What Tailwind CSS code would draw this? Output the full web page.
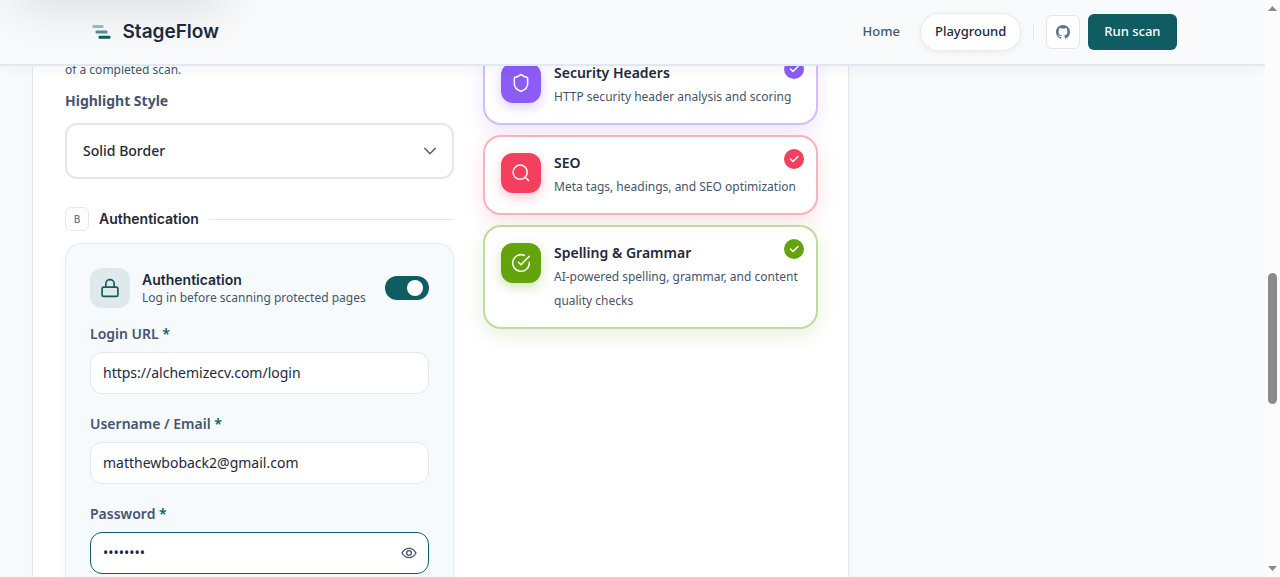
<!DOCTYPE html>
<html lang="en">
<head>
    <meta charset="UTF-8">
    <meta name="viewport" content="width=device-width, initial-scale=1.0">
    <title>StageFlow - Playground</title>
    <script src="https://cdn.jsdelivr.net/npm/@tailwindcss/browser@4"></script>
</head>

<body class="flex h-screen overflow-hidden bg-[#f8fafc] font-['Noto_Sans',sans-serif] text-[#1e293b]">
    <div class="relative flex-1 min-w-0 overflow-hidden">

        <!-- Header -->
        <header class="absolute inset-x-0 top-0 z-10 border-b-2 border-slate-200 bg-[#f8fafc] shadow-[0_4px_12px_rgba(15,23,42,0.04)]">
            <div class="absolute inset-0 overflow-hidden">
                <div class="absolute -top-10 left-4 h-12 w-52 bg-black/12 blur-xl"></div>
            </div>
            <div class="relative mx-auto flex h-16 max-w-6xl items-center justify-between px-8">
                <a href="#" class="flex items-center gap-2 font-['Inter',sans-serif] text-[19px] font-semibold">
                    <svg class="size-[26px]" viewBox="0 0 26 26" fill="#0f5c63" aria-hidden="true">
                        <rect x="3.500" y="6" width="11" height="3" rx="1" opacity=".4"/>
                        <rect x="6.500" y="11.400" width="12" height="3" rx="1" opacity=".7"/>
                        <rect x="9.500" y="16.800" width="12" height="3" rx="1"/>
                    </svg>
                    StageFlow
                </a>
                <div class="flex items-center text-[13px] font-medium">
                    <nav class="flex items-center gap-[5px]">
                        <a href="#" class="rounded-full border border-transparent px-3.5 pt-2 pb-2.5 leading-[18px] text-slate-600">Home</a>
                        <a href="#" class="rounded-full border border-slate-200/80 bg-white px-3.5 pt-2 pb-2.5 leading-[18px] shadow-[0_2px_6px_rgba(15,23,42,0.06)]">Playground</a>
                    </nav>
                    <div class="mx-3 h-4 w-px bg-slate-200"></div>
                    <a href="#" aria-label="GitHub" class="flex size-[34px] items-center justify-center rounded-md border border-slate-200 bg-white text-slate-500">
                        <svg class="size-3.5" viewBox="0 0 16 16" fill="currentColor"><path d="M8 0C3.58 0 0 3.58 0 8c0 3.54 2.29 6.53 5.47 7.59.4.07.55-.17.55-.38 0-.19-.01-.82-.01-1.49-2.01.37-2.53-.49-2.69-.94-.09-.23-.48-.94-.82-1.13-.28-.15-.68-.52-.01-.53.63-.01 1.08.58 1.23.82.72 1.21 1.87.87 2.33.66.07-.52.28-.87.51-1.07-1.78-.2-3.64-.89-3.64-3.95 0-.87.31-1.59.82-2.15-.08-.2-.36-1.02.08-2.12 0 0 .67-.21 2.2.82.64-.18 1.32-.27 2-.27s1.36.09 2 .27c1.53-1.04 2.2-.82 2.2-.82.44 1.1.16 1.92.08 2.12.51.56.82 1.27.82 2.15 0 3.07-1.87 3.75-3.65 3.95.29.25.54.73.54 1.48 0 1.07-.01 1.93-.01 2.2 0 .21.15.46.55.38A8.01 8.01 0 0 0 16 8c0-4.42-3.58-8-8-8z"/></svg>
                    </a>
                    <button class="ml-2 h-9 rounded-md bg-[#0f5c63] px-4 text-white">Run scan</button>
                </div>
            </div>
        </header>

        <!-- Scan setup -->
        <main class="grid min-h-full grid-cols-[minmax(0,1fr)_352px] gap-8 px-8">
            <div class="grid grid-cols-[minmax(0,389fr)_minmax(0,335fr)] gap-[29px] border-x border-slate-200 bg-white pl-8 pr-[30px] shadow-[0_0_24px_rgba(15,23,42,0.02)]">

                <section class="pt-[60px]">
                    <p class="text-xs leading-5 text-slate-600">of a completed scan.</p>
                    <label for="highlight" class="mt-[11px] block text-sm/5 font-bold text-slate-600">Highlight Style</label>
                    <div class="relative mt-3">
                        <select id="highlight" class="h-14 w-full appearance-none rounded-xl border-2 border-slate-200 bg-white px-4 text-sm font-medium">
                            <option>Solid Border</option>
                        </select>
                        <svg class="pointer-events-none absolute right-4 top-5 size-4 text-slate-600" viewBox="0 0 24 24" fill="none" stroke="currentColor" stroke-width="2" stroke-linecap="round" stroke-linejoin="round"><path d="m4 8 8 8 8-8"/></svg>
                    </div>

                    <div class="mt-7 flex items-center gap-2.5">
                        <span class="flex size-6 items-center justify-center rounded-md border border-slate-200 bg-white text-[10px] font-medium text-slate-500">B</span>
                        <h2 class="font-['Inter',sans-serif] text-sm font-semibold">Authentication</h2>
                        <div class="h-px flex-1 bg-slate-200"></div>
                    </div>

                    <div class="mt-3 rounded-2xl border border-slate-200/80 bg-[#f6fafd] p-6 shadow-[0_1px_6px_rgba(15,23,42,0.04)]">
                        <div class="flex items-center gap-3">
                            <div class="flex size-10 shrink-0 items-center justify-center rounded-xl bg-[#dfe9eb] text-[#0f5c63]">
                                <svg class="size-5" viewBox="0 0 24 24" fill="none" stroke="currentColor" stroke-width="2" stroke-linecap="round" stroke-linejoin="round"><rect x="2.500" y="11" width="19" height="11" rx="2"/><path d="M7 11V7a5 5 0 0 1 10 0v4"/></svg>
                            </div>
                            <div class="min-w-0 flex-1">
                                <h3 class="font-['Inter',sans-serif] text-sm/5 font-semibold">Authentication</h3>
                                <p class="text-xs text-slate-600">Log in before scanning protected pages</p>
                            </div>
                            <label class="flex h-6 w-11 shrink-0 cursor-pointer items-center rounded-full bg-slate-300 px-1.5 has-checked:justify-end has-checked:bg-[#0f5c63]">
                                <input type="checkbox" checked aria-label="Enable authentication" class="size-4 appearance-none rounded-full bg-white">
                            </label>
                        </div>

                        <label for="login-url" class="mt-4 block text-sm/5 font-semibold text-slate-600">Login URL <span class="text-[#0f5c63]">*</span></label>
                        <input id="login-url" type="text" value="https://alchemizecv.com/login" class="mt-2 h-[42px] w-full rounded-xl border border-slate-200 bg-white px-3 pb-0.5 text-sm">

                        <label for="username" class="mt-5 block text-sm/5 font-semibold text-slate-600">Username / Email <span class="text-[#0f5c63]">*</span></label>
                        <input id="username" type="text" value="matthewboback2@gmail.com" class="mt-2 h-[42px] w-full rounded-xl border border-slate-200 bg-white px-3 pb-0.5 text-sm">

                        <label for="password" class="mt-5 block text-sm/5 font-semibold text-slate-600">Password <span class="text-[#0f5c63]">*</span></label>
                        <div class="relative mt-2">
                            <input id="password" type="password" value="password" class="h-[42px] w-full rounded-xl border border-[#0f5c63] bg-white pb-0.5 pl-3 pr-10 text-sm outline-none">
                            <button aria-label="Show password" class="absolute inset-y-0 right-3 text-slate-600">
                                <svg class="size-4" viewBox="0 0 24 24" fill="none" stroke="currentColor" stroke-width="2" stroke-linecap="round" stroke-linejoin="round"><path d="M1.500 12s4-7 10.500-7 10.500 7 10.500 7-4 7-10.500 7S1.500 12 1.500 12z"/><circle cx="12" cy="12" r="3.500"/></svg>
                            </button>
                        </div>
                    </div>
                </section>

                <!-- Checks -->
                <section class="flex flex-col gap-2.5 pt-[45px]">
                    <article class="relative flex gap-3 rounded-[18px] border-2 border-[#8b5cf6]/40 bg-white p-4 pb-3.5 shadow-[0_6px_20px_rgba(139,92,246,0.15)]">
                        <div class="flex size-10 shrink-0 items-center justify-center rounded-xl bg-[#8b5cf6] text-white shadow-[0_4px_12px_rgba(139,92,246,0.3)]">
                            <svg class="size-5" viewBox="0 0 24 24" fill="none" stroke="currentColor" stroke-width="1.800" stroke-linecap="round" stroke-linejoin="round"><path d="M20 13c0 5-3.500 7.500-7.660 8.950a1 1 0 0 1-.67-.01C7.500 20.500 4 18 4 13V6a1 1 0 0 1 1-1c2 0 4.500-1.200 6.240-2.720a1.170 1.170 0 0 1 1.520 0C14.510 3.810 17 5 19 5a1 1 0 0 1 1 1z"/></svg>
                        </div>
                        <div class="pl-px">
                            <h3 class="text-sm/5 font-semibold">Security Headers</h3>
                            <p class="mt-0.5 text-xs/6 text-slate-600">HTTP security header analysis and scoring</p>
                        </div>
                        <span class="absolute right-3 top-3 flex size-5 items-center justify-center rounded-full bg-[#8b5cf6] text-white">
                            <svg class="size-3" viewBox="0 0 24 24" fill="none" stroke="currentColor" stroke-width="3" stroke-linecap="round" stroke-linejoin="round"><path d="M20 7 10 17l-5-5"/></svg>
                        </span>
                    </article>

                    <article class="relative flex gap-3 rounded-[18px] border-2 border-[#f43f5e]/40 bg-white p-4 pb-3.5 shadow-[0_6px_20px_rgba(244,63,94,0.15)]">
                        <div class="flex size-10 shrink-0 items-center justify-center rounded-xl bg-[#f43f5e] text-white shadow-[0_4px_12px_rgba(244,63,94,0.3)]">
                            <svg class="size-5" viewBox="0 0 24 24" fill="none" stroke="currentColor" stroke-width="1.800" stroke-linecap="round" stroke-linejoin="round"><circle cx="11" cy="11" r="8.500"/><path d="m21 21-4-4"/></svg>
                        </div>
                        <div class="pl-px">
                            <h3 class="text-sm/5 font-semibold">SEO</h3>
                            <p class="mt-0.5 text-xs/6 text-slate-600">Meta tags, headings, and SEO optimization</p>
                        </div>
                        <span class="absolute right-3 top-3 flex size-5 items-center justify-center rounded-full bg-[#f43f5e] text-white">
                            <svg class="size-3" viewBox="0 0 24 24" fill="none" stroke="currentColor" stroke-width="3" stroke-linecap="round" stroke-linejoin="round"><path d="M20 7 10 17l-5-5"/></svg>
                        </span>
                    </article>

                    <article class="relative flex gap-3 rounded-[18px] border-2 border-[#65a30d]/40 bg-white p-4 pb-3.5 shadow-[0_6px_20px_rgba(101,163,13,0.15)]">
                        <div class="flex size-10 shrink-0 items-center justify-center rounded-xl bg-[#65a30d] text-white shadow-[0_4px_12px_rgba(101,163,13,0.3)]">
                            <svg class="size-5" viewBox="0 0 24 24" fill="none" stroke="currentColor" stroke-width="1.800" stroke-linecap="round" stroke-linejoin="round"><path d="M22 11.080V12a10 10 0 1 1-5.930-9.140"/><path d="M22 4 12 14.010l-3-3"/></svg>
                        </div>
                        <div class="pl-px">
                            <h3 class="text-sm/5 font-semibold">Spelling &amp; Grammar</h3>
                            <p class="mt-0.5 text-xs/6 text-slate-600">AI-powered spelling, grammar, and content quality checks</p>
                        </div>
                        <span class="absolute right-3 top-3 flex size-5 items-center justify-center rounded-full bg-[#65a30d] text-white">
                            <svg class="size-3" viewBox="0 0 24 24" fill="none" stroke="currentColor" stroke-width="3" stroke-linecap="round" stroke-linejoin="round"><path d="M20 7 10 17l-5-5"/></svg>
                        </span>
                    </article>
                </section>
            </div>
        </main>
    </div>

    <!-- Scrollbar -->
    <div class="flex w-[15px] shrink-0 flex-col items-center bg-[#fcfcfc] py-1.5" aria-hidden="true">
        <svg class="h-[5px] w-[9px]" viewBox="0 0 9 5" fill="#8b8b8b"><path d="M0 5 4.500 0 9 5z"/></svg>
        <div class="flex w-full flex-1 flex-col items-center">
            <div class="grow-[262]"></div>
            <div class="w-[9px] grow-[131] rounded-full bg-[#8b8b8b]"></div>
            <div class="grow-[162]"></div>
        </div>
        <svg class="h-[5px] w-[9px]" viewBox="0 0 9 5" fill="#8b8b8b"><path d="M0 0h9L4.500 5z"/></svg>
    </div>
</body>
</html>
